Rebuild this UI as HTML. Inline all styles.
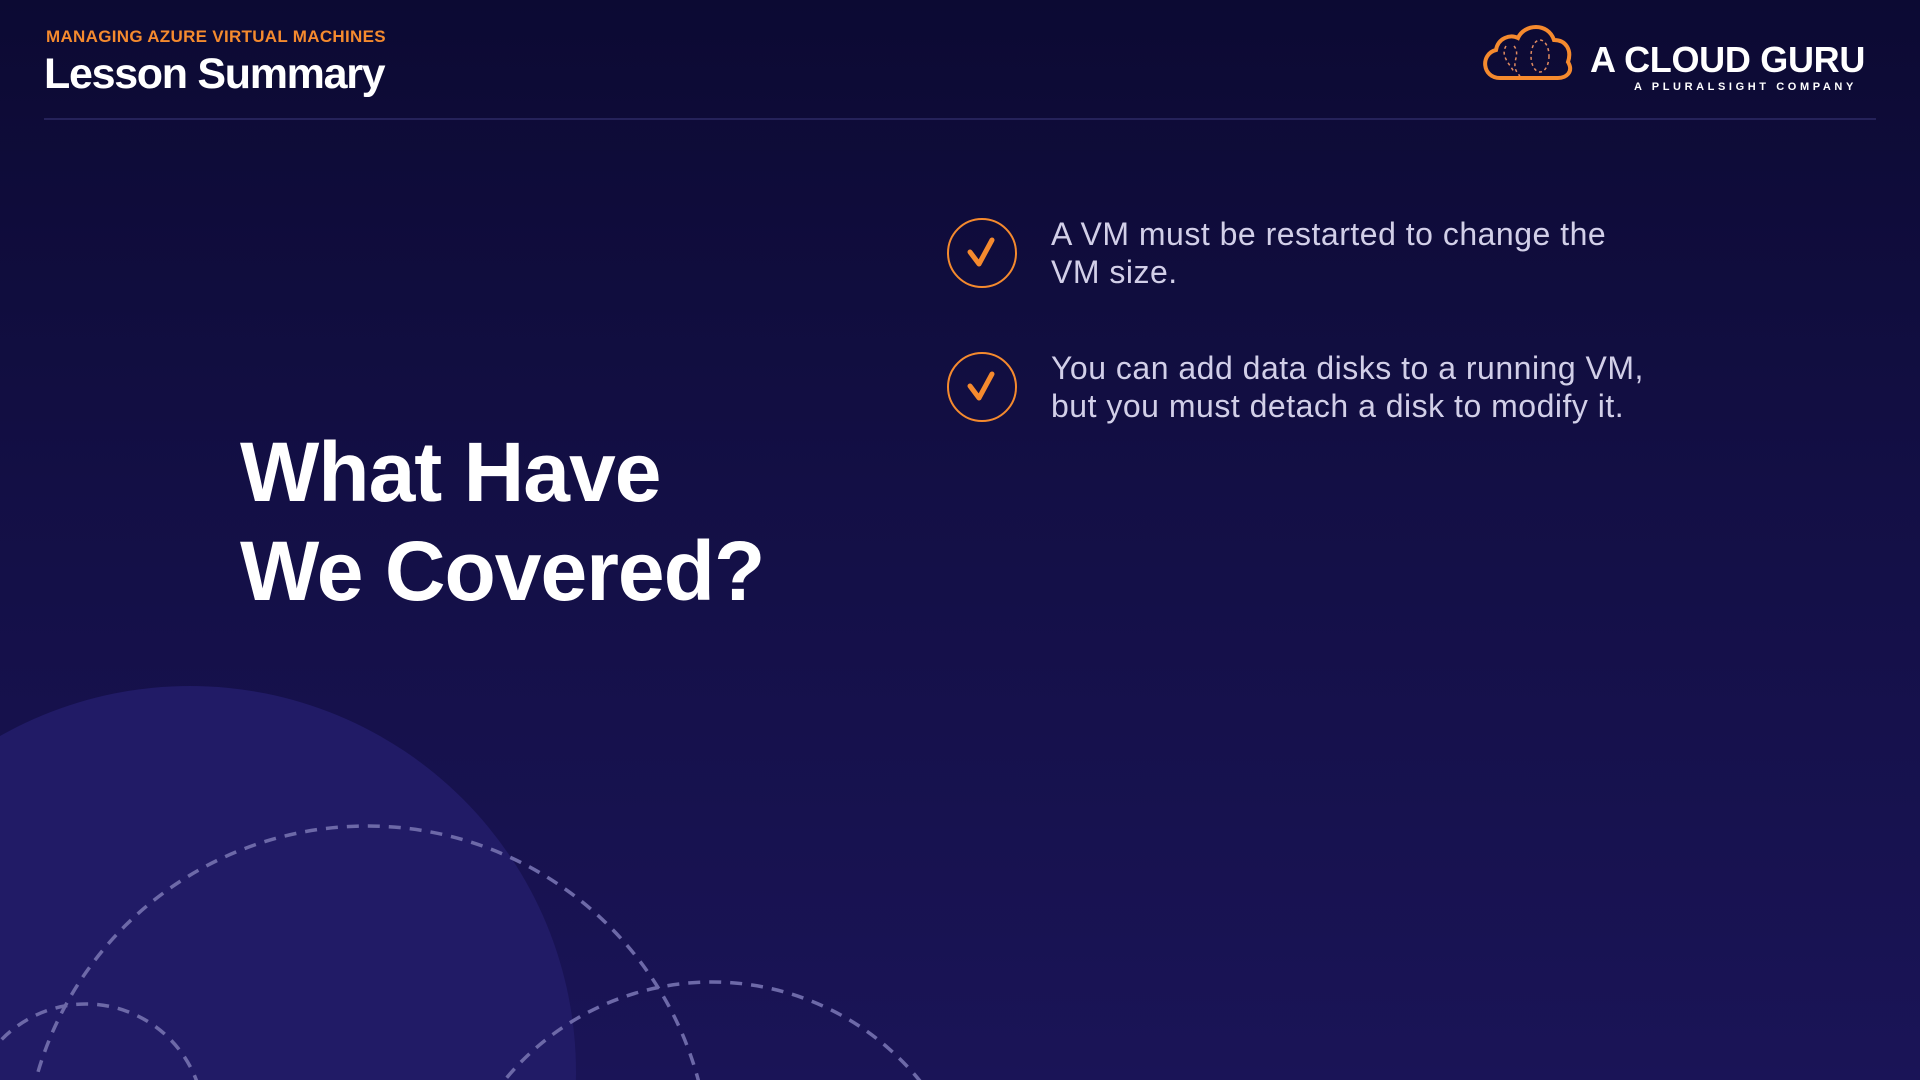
<!DOCTYPE html>
<html><head><meta charset="utf-8"><style>
*{margin:0;padding:0;box-sizing:border-box}
html,body{width:1920px;height:1080px;overflow:hidden}
body{position:relative;font-family:"Liberation Sans",sans-serif;background:linear-gradient(180deg,#0c0a33 0%,#130f45 45%,#1a1457 100%)}
.abs{position:absolute;white-space:nowrap}
svg{display:block}
</style></head><body>
<svg class="abs" style="left:0;top:0" width="1920" height="1080">
<circle cx="190" cy="1072" r="386" fill="#211b66"/>
<g fill="none" stroke="#6d69a8" stroke-width="3.5" stroke-dasharray="12 9">
<circle cx="367" cy="1169" r="343"/>
<circle cx="86" cy="1122" r="118"/>
<circle cx="712" cy="1250" r="268"/>
</g>
<line x1="44" y1="119" x2="1876" y2="119" stroke="#25225a" stroke-width="2"/>
<g fill="none" stroke="#f58a2e" stroke-width="2">
<circle cx="982" cy="253" r="34"/>
<circle cx="982" cy="387" r="34"/>
</g>
<g fill="none" stroke="#f58a2e" stroke-width="5" stroke-linecap="round" stroke-linejoin="round">
<path d="M970 252 L979 264 L992 240"/>
<path d="M970 386 L979 398 L992 374"/>
</g>
<g fill="none" stroke="#f58a2e" stroke-width="4">
<path d="M1500 78 C1482 78 1480 54 1496 50 C1498 38 1510 34 1518 38 C1524 24 1548 22 1554 40 C1566 40 1572 50 1568 62 C1574 72 1566 78 1558 78 Z"/>
</g>
<g fill="none" stroke="#e08a60" stroke-width="1.5" stroke-dasharray="3 3">
<path d="M1506 46 C1500 56 1510 64 1514 72"/><path d="M1514 46 C1522 56 1508 64 1520 76"/>
<ellipse cx="1540" cy="56" rx="9" ry="16"/>
</g>
</svg>
<div class="abs" style="left:46px;top:27px;font-size:17px;font-weight:bold;color:#f58a2e;letter-spacing:0.3px">MANAGING AZURE VIRTUAL MACHINES</div>
<div class="abs" style="left:44px;top:50px;font-size:43px;font-weight:bold;color:#fff;letter-spacing:-1.3px">Lesson Summary</div>
<div class="abs" style="left:1590px;top:39px;font-size:36px;font-weight:bold;color:#fff;letter-spacing:-0.3px">A CLOUD GURU</div>
<div class="abs" style="left:1634px;top:81px;font-size:11px;font-weight:bold;color:#fff;letter-spacing:3.6px">A PLURALSIGHT COMPANY</div>
<div class="abs" style="left:240px;top:423px;font-size:84px;font-weight:bold;color:#fff;line-height:99px;letter-spacing:-1px">What Have<br>We Covered?</div>
<div class="abs" style="left:1051px;top:215px;font-size:32px;color:#d2cfe8;line-height:38px;letter-spacing:0.5px">A VM must be restarted to change the<br>VM size.</div>
<div class="abs" style="left:1051px;top:349px;font-size:32px;color:#d2cfe8;line-height:38px;letter-spacing:0.5px">You can add data disks to a running VM,<br>but you must detach a disk to modify it.</div>
</body></html>
